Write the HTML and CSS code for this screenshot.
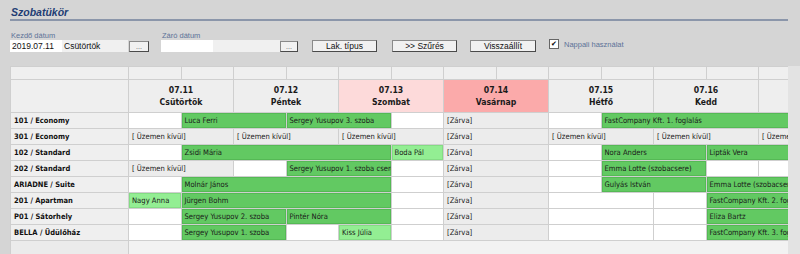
FILE: index.html
```html
<!DOCTYPE html>
<html lang="hu">
<head>
  <meta charset="UTF-8" />
  <title>Szobatükör</title>
  <link rel="stylesheet" href="styles.css">
</head>
<body>

  <div class="page">
    <h1 class="title">Szobatükör</h1>

    <div class="toolbar">
      <div class="field">
        <label>Kezdő dátum</label>
        <div class="field-row">
          <span class="input">2019.07.11</span>
          <span class="input day">Csütörtök</span>
          <button class="dots">...</button>
        </div>
      </div>
      <div class="field end">
        <label>Záró dátum</label>
        <div class="field-row">
          <span class="input"></span>
          <span class="input day"></span>
          <button class="dots">...</button>
        </div>
      </div>
      <button class="btn">Lak. típus</button>
      <button class="btn">&gt;&gt; Szűrés</button>
      <button class="btn wide">Visszaállít</button>
      <div class="check">
        <span class="box">&#10004;</span>
        <span>Nappali használat</span>
      </div>
    </div>
  </div>

  <div class="board">
    <div class="schedule">
      <!-- half-day header -->
      <div class="c head"></div>
      <div class="c head"></div><div class="c head"></div><div class="c head"></div><div class="c head"></div>
      <div class="c head"></div><div class="c head"></div><div class="c head"></div><div class="c head"></div>
      <div class="c head"></div><div class="c head"></div><div class="c head"></div><div class="c head"></div>
      <div class="c head"></div>

      <!-- days -->
      <div class="c head"></div>
      <div class="c date s2">07.11<br>Csütörtök</div>
      <div class="c date s2">07.12<br>Péntek</div>
      <div class="c date s2 sat">07.13<br>Szombat</div>
      <div class="c date s2 sun">07.14<br>Vasárnap</div>
      <div class="c date s2">07.15<br>Hétfő</div>
      <div class="c date s2">07.16<br>Kedd</div>
      <div class="c date"></div>

      <div class="c room">101 / Economy</div>
      <div class="c free"></div>
      <div class="c res s2">Luca Ferri</div>
      <div class="c res s2">Sergey Yusupov 3. szoba</div>
      <div class="c free"></div>
      <div class="c off s2">[Zárva]</div>
      <div class="c free"></div>
      <div class="c res s4">FastCompany Kft. 1. foglalás</div>

      <div class="c room">301 / Economy</div>
      <div class="c off s2">[ Üzemen kívül]</div>
      <div class="c off s2">[ Üzemen kívül]</div>
      <div class="c off s2">[ Üzemen kívül]</div>
      <div class="c off s2">[Zárva]</div>
      <div class="c off s2">[ Üzemen kívül]</div>
      <div class="c off s2">[ Üzemen kívül]</div>
      <div class="c off">[ Üzemen kívül]</div>

      <div class="c room">102 / Standard</div>
      <div class="c free"></div>
      <div class="c res s4">Zsidi Mária</div>
      <div class="c res light">Boda Pál</div>
      <div class="c off s2">[Zárva]</div>
      <div class="c free"></div>
      <div class="c res s2">Nora Anders</div>
      <div class="c res s2">Lipták Vera</div>

      <div class="c room">202 / Standard</div>
      <div class="c off s2">[ Üzemen kívül]</div>
      <div class="c free"></div>
      <div class="c res s2">Sergey Yusupov 1. szoba csere</div>
      <div class="c free"></div>
      <div class="c off s2">[Zárva]</div>
      <div class="c free"></div>
      <div class="c res s2">Emma Lotte (szobacsere)</div>
      <div class="c free"></div>
      <div class="c free"></div>

      <div class="c room">ARIADNE / Suite</div>
      <div class="c free"></div>
      <div class="c res s4">Molnár János</div>
      <div class="c free"></div>
      <div class="c off s2">[Zárva]</div>
      <div class="c free"></div>
      <div class="c res s2">Gulyás István</div>
      <div class="c res s2">Emma Lotte (szobacsere)</div>

      <div class="c room">201 / Apartman</div>
      <div class="c res light">Nagy Anna</div>
      <div class="c res s4">Jürgen Bohm</div>
      <div class="c free"></div>
      <div class="c off s2">[Zárva]</div>
      <div class="c free s2"></div>
      <div class="c free"></div>
      <div class="c res s2">FastCompany Kft. 2. foglalás</div>

      <div class="c room">P01 / Sátorhely</div>
      <div class="c free"></div>
      <div class="c res s2">Sergey Yusupov 2. szoba</div>
      <div class="c res s2">Pintér Nóra</div>
      <div class="c free"></div>
      <div class="c off s2">[Zárva]</div>
      <div class="c free s2"></div>
      <div class="c free"></div>
      <div class="c res s2">Eliza Bartz</div>

      <div class="c room">BELLA / Üdülőház</div>
      <div class="c free"></div>
      <div class="c res s2">Sergey Yusupov 1. szoba</div>
      <div class="c free"></div>
      <div class="c res light">Kiss Júlia</div>
      <div class="c free"></div>
      <div class="c off s2">[Zárva]</div>
      <div class="c free s2"></div>
      <div class="c free"></div>
      <div class="c res s2">FastCompany Kft. 3. foglalás</div>

      <div class="c room last"></div>
      <div class="c filler"></div>
    </div>
    <div class="scroll"></div>
  </div>

</body>
</html>
```

FILE: styles.css
```css
body {
  margin: 0;
  background: #d5d5d5;
  font-family: "Liberation Sans", Arial, sans-serif;
  overflow: hidden;
}

.page {
  padding: 6px 12px 0 10px;
}

.title {
  margin: 0;
  padding-left: 1px;
  font-size: 10.5px;
  line-height: 13px;
  font-style: italic;
  font-weight: bold;
  color: #1f3d74;
  border-bottom: 2px solid #8b96aa;
}

/* toolbar */
.toolbar {
  display: flex;
  align-items: flex-end;
  margin-top: 10px;
  height: 21px;
}

.field label {
  display: block;
  font-size: 7.5px;
  line-height: 9px;
  color: #5c7298;
  padding-left: 1px;
}

.field.end {
  margin-left: 12px;
}

.field-row {
  display: flex;
  height: 12px;
}

.input {
  display: block;
  width: 50px;
  height: 12px;
  padding-left: 2px;
  background: #fff;
  font-size: 8.5px;
  line-height: 12px;
  color: #111;
}

.input.day {
  width: 64px;
  background: #f0f0f0;
}

.field.end .input.day {
  width: 65px;
}

button {
  font-family: "Liberation Sans", Arial, sans-serif;
  padding: 0;
  background: #f1f1f1;
  border: 1px solid #8a8a8a;
  border-right-color: #4a4a4a;
  border-bottom-color: #4a4a4a;
  color: #111;
  cursor: pointer;
}

.dots {
  width: 20px;
  height: 11px;
  margin-left: 1px;
  margin-top: 1px;
  font-size: 7px;
  line-height: 8px;
  color: #555;
}

.field.end .dots {
  width: 18px;
  margin-left: 0;
}

.btn {
  width: 65px;
  height: 12px;
  margin-left: 14px;
  font-size: 8.5px;
  line-height: 10px;
}

.btn + .btn {
  margin-left: 15px;
}

.btn.wide {
  width: 66px;
  margin-left: 13px;
}

.check {
  display: flex;
  align-items: center;
  margin-left: 13px;
  margin-bottom: 3px;
  font-size: 7.5px;
  color: #5c7298;
}

.box {
  width: 8px;
  height: 8px;
  margin-right: 5px;
  background: #fff;
  border: 1px solid #666;
  font-size: 7px;
  line-height: 8px;
  text-align: center;
  color: #000;
}

/* schedule grid */
.board {
  display: flex;
  margin-top: 14px;
  padding-left: 10px;
  height: 189px;
}

.schedule {
  width: 777px;
  padding: 1px 0 0 1px;
  overflow: hidden;
  display: grid;
  grid-template-columns: 117px repeat(13, 51.5px);
  grid-template-rows: 12px 32px repeat(8, 15px) 20px;
  gap: 1px;
  background: #cfcfcf;
  font-family: "DejaVu Sans Condensed", "DejaVu Sans", sans-serif;
  font-stretch: condensed;
}

.scroll {
  flex: 1;
  background: #e3e3e3;
}

.c {
  font-size: 7.6px;
  line-height: 15px;
  padding-left: 3px;
  white-space: nowrap;
  overflow: hidden;
  color: #1a1a1a;
}

.s2 {
  grid-column: span 2;
}

.s4 {
  grid-column: span 4;
}

.head {
  background: #efefef;
}

.date {
  background: #eeeeee;
  padding: 4px 0 0;
  text-align: center;
  font-size: 8.6px;
  line-height: 12px;
  font-weight: bold;
  color: #1a1a1a;
}

.date.sat {
  background: #fddada;
}

.date.sun {
  background: #fbaaaa;
}

.room {
  background: #efefef;
  font-weight: bold;
  font-size: 7.5px;
  line-height: 16px;
  color: #111;
}

.free {
  background: #fff;
}

.off {
  background: #ececec;
}

.res {
  background: #62c962;
  box-shadow: inset 0 0 0 1px #55b955;
}

.res.light {
  background: #93ee93;
  box-shadow: inset 0 0 0 1px #84dc84;
}

.room.last {
  background: #ebebeb;
}

.filler {
  grid-column: span 13;
  background: #f2f2f2;
}
```
